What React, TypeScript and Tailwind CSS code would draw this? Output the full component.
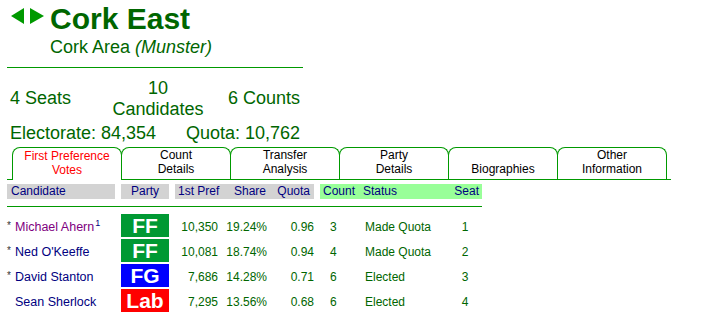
import React from 'react';

const tabs = [
  { id: 'first', lines: ['First Preference', 'Votes'], active: true },
  { id: 'count', lines: ['Count', 'Details'] },
  { id: 'transfer', lines: ['Transfer', 'Analysis'] },
  { id: 'party', lines: ['Party', 'Details'] },
  { id: 'bio', lines: ['Biographies'] },
  { id: 'other', lines: ['Other', 'Information'] },
];

const partyColor: Record<string, string> = {
  FF: 'bg-[#009933]',
  FG: 'bg-[#0000ff]',
  Lab: 'bg-[#ff0000]',
};

const rows = [
  { id: 1, inc: true, name: 'Michael Ahern', note: '1', visited: true, party: 'FF', first: '10,350', share: '19.24%', quota: '0.96', count: '3', status: 'Made Quota', seat: '1' },
  { id: 2, inc: true, name: "Ned O'Keeffe", party: 'FF', first: '10,081', share: '18.74%', quota: '0.94', count: '4', status: 'Made Quota', seat: '2' },
  { id: 3, inc: true, name: 'David Stanton', party: 'FG', first: '7,686', share: '14.28%', quota: '0.71', count: '6', status: 'Elected', seat: '3' },
  { id: 4, inc: false, name: 'Sean Sherlock', party: 'Lab', first: '7,295', share: '13.56%', quota: '0.68', count: '6', status: 'Elected', seat: '4' },
];

export default function App() {
  return (
    <div className="w-[707px] h-[320px] bg-white overflow-hidden font-['Liberation_Sans',Arial,sans-serif] text-[#006600]">
      {/* title */}
      <div className="flex">
        <div className="w-[50px] pl-[11px] pt-[8px]">
          <svg width="34" height="16" viewBox="0 0 34 16">
            <polygon points="13,0 0,8 13,16" fill="#009900" />
            <polygon points="19,0 33,8 19,16" fill="#009900" />
          </svg>
        </div>
        <div className="pt-[2px]">
          <h1 className="text-[30px] leading-[34px] font-bold">Cork East</h1>
          <p className="mt-[1px] text-[18px] leading-[21px]">
            Cork Area <i>(Munster)</i>
          </p>
        </div>
      </div>
      <div className="ml-[7px] mt-[9px] w-[296px] h-px bg-[#009900]" />

      {/* stats */}
      <div className="ml-[10px] mt-[10px] flex items-center text-[18px] leading-[20.5px]">
        <div className="w-[100px]">4 Seats</div>
        <div className="w-[96px] text-center">
          10
          <br />
          Candidates
        </div>
        <div className="w-[94px] text-right">6 Counts</div>
      </div>
      <div className="ml-[10px] mt-[4px] flex w-[290px] justify-between text-[18px] leading-[20px]">
        <span>Electorate: 84,354</span>
        <span>Quota: 10,762</span>
      </div>

      {/* tabs */}
      <div className="ml-[7px] mt-[4px] w-[664px] h-[33px] pl-[5px] flex border-b border-[#009900]">
        {tabs.map((tab, i) => (
          <div
            key={tab.id}
            className={
              'w-[110px] border border-b-0 border-[#009900] rounded-t-[8px] flex items-end justify-center pb-[3px] text-[12px] leading-[13.5px] text-center bg-white ' +
              (i > 0 ? '-ml-px ' : '') +
              (tab.active ? 'relative h-[33px] text-[#ff0000]' : 'h-[32px] text-black')
            }
          >
            <div>
              {tab.lines.map(line => (
                <div key={line}>{line}</div>
              ))}
            </div>
          </div>
        ))}
      </div>

      {/* header row */}
      <div className="ml-[7px] mt-[4px] flex gap-[6px] text-[12px] leading-[15px] text-[#000080]">
        <div className="w-[108px] bg-[#d3d3d3] pl-[4px]">Candidate</div>
        <div className="w-[48px] bg-[#d3d3d3] text-center">Party</div>
        <div className="flex bg-[#d3d3d3]">
          <div className="w-[46px] pl-[3px]">1st Pref</div>
          <div className="w-[49px] text-right pr-[4px]">Share</div>
          <div className="w-[44px] text-right pr-[4px]">Quota</div>
        </div>
        <div className="flex bg-[#99ff99]">
          <div className="w-[40px] pl-[3px]">Count</div>
          <div className="w-[88px] pl-[3px]">Status</div>
          <div className="w-[34px] text-right pr-[3px]">Seat</div>
        </div>
      </div>
      <div className="ml-[7px] mt-[7px] w-[475px] h-px bg-[#009900]" />

      {/* candidates */}
      <div className="ml-[7px] mt-[6px]">
        {rows.map(row => (
          <div key={row.id} className="flex h-[25px] text-[12.5px]">
            <div className="w-[114px] pt-[4px] leading-[21px] whitespace-nowrap">
              <span className="inline-block w-[8px] text-[10px] text-[#333333] relative -top-[2px]">{row.inc ? '*' : ''}</span>
              <span className={row.visited ? 'text-[#800080]' : 'text-[#000080]'}>{row.name}</span>
              {row.note && <span className="text-[9px] text-[#000080] relative -top-[5px] ml-px">{row.note}</span>}
            </div>
            <div
              className={
                'w-[48px] h-[23px] my-[1px] flex items-center justify-center text-white font-bold text-[21px] leading-[21px] ' +
                partyColor[row.party]
              }
            >
              {row.party}
            </div>
            <div className="ml-[6px] flex pt-[4px] leading-[21px] text-[12px]">
              <div className="w-[46px] text-right pr-[3px]">{row.first}</div>
              <div className="w-[49px] text-right pr-[3px]">{row.share}</div>
              <div className="w-[44px] text-right">{row.quota}</div>
              <div className="ml-[6px] w-[40px] pl-[10px]">{row.count}</div>
              <div className="w-[88px] pl-[5px]">{row.status}</div>
              <div className="w-[34px] text-center">{row.seat}</div>
            </div>
          </div>
        ))}
      </div>
    </div>
  );
}
